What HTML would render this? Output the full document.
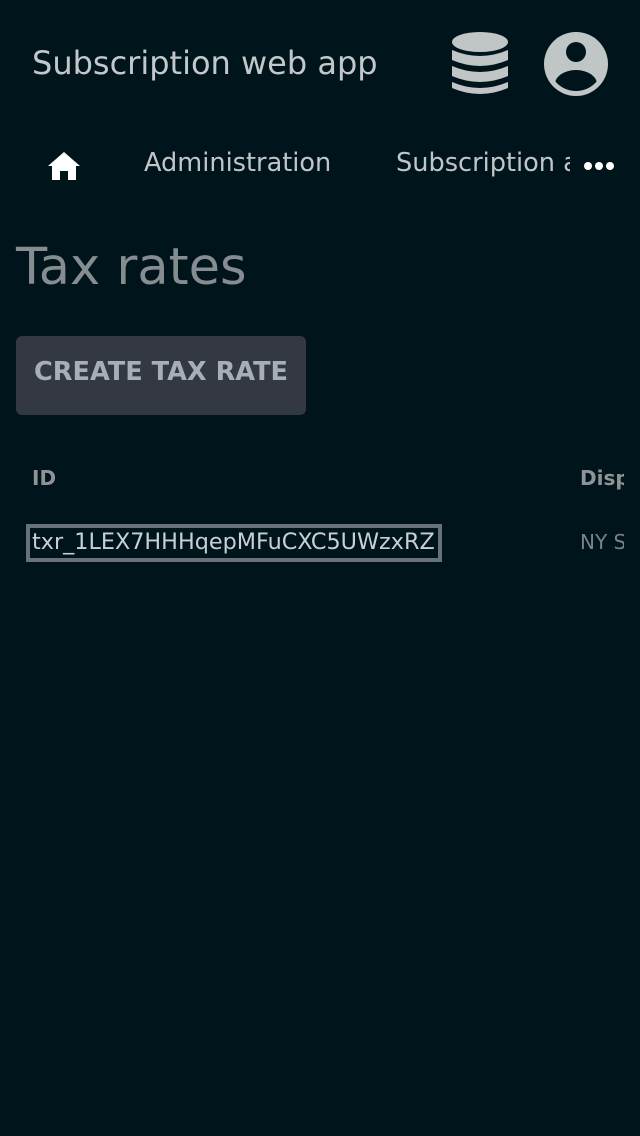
<!DOCTYPE html>
<html><head><style>
body{margin:0;width:640px;height:1136px;background:#00141c;font-family:"DejaVu Sans","Liberation Sans",sans-serif;position:relative;overflow:hidden;color:#c0c6c8}
.a{position:absolute;white-space:nowrap}
</style></head><body>
<div class="a" style="left:32px;top:44px;font-size:32px;color:#c2c8ca">Subscription web app</div>
<svg class="a" style="left:448px;top:30px" width="64" height="70" viewBox="448 30 64 70">
<g fill="#c0c6c6">
<ellipse cx="480" cy="42" rx="28" ry="10"/>
<path d="M452 50 Q480 62 508 50 V60 Q480 72 452 60Z"/>
<path d="M452 66 Q480 78 508 66 V76 Q480 88 452 76Z"/>
<path d="M452 82 Q480 94 508 82 V88 Q480 100 452 88Z"/>
</g></svg>
<svg class="a" style="left:544px;top:32px" width="64" height="64" viewBox="0 0 64 64">
<defs><clipPath id="c"><circle cx="32" cy="32" r="27"/></clipPath></defs>
<circle cx="32" cy="32" r="32" fill="#c0c6c6"/>
<circle cx="32" cy="20" r="10" fill="#00141c"/>
<ellipse cx="32" cy="52" rx="21" ry="14" fill="#00141c" clip-path="url(#c)"/>
</svg>
<svg class="a" style="left:48px;top:152px" width="32" height="28" viewBox="0 0 32 28"><path d="M16 0 L32 14 H28 V28 H20 V19 H12 V28 H4 V14 H0Z" fill="#fff"/></svg>
<div class="a" style="left:144px;top:148px;font-size:25.6px;color:#c0c6c8">Administration</div>
<div class="a" style="left:396px;top:148px;font-size:25.6px;color:#c0c6c8;width:174px;overflow:hidden">Subscription and</div>
<div class="a" style="left:584px;top:155px">
<span style="display:inline-block;width:8px;height:8px;border-radius:50%;background:#fff;margin-right:3px"></span><span style="display:inline-block;width:8px;height:8px;border-radius:50%;background:#fff;margin-right:3px"></span><span style="display:inline-block;width:8px;height:8px;border-radius:50%;background:#fff"></span></div>
<div class="a" style="left:16px;top:238px;font-size:51px;color:#858d90">Tax rates</div>
<div class="a" style="left:16px;top:336px;width:290px;height:79px;background:#343840;border-radius:6px"></div>
<div class="a" style="left:34px;top:357px;font-size:25.6px;font-weight:bold;color:#a6afb8">CREATE TAX RATE</div>
<div class="a" style="left:32px;top:466px;font-size:20px;font-weight:bold;color:#8d9396">ID</div>
<div class="a" style="left:580px;top:466px;font-size:20px;font-weight:bold;color:#8d9396;width:44px;overflow:hidden">Display</div>
<div class="a" style="left:26px;top:524px;width:408px;height:30px;border:4px solid #687078;background:#00141c"></div>
<div class="a" style="left:32px;top:528px;font-size:22.3px;line-height:28px;color:#c8d0d4">txr_1LEX7HHHqepMFuCXC5UWzxRZ</div>
<div class="a" style="left:580px;top:530px;font-size:20px;color:#7a8286;width:44px;overflow:hidden">NY Sales</div>
</body></html>
